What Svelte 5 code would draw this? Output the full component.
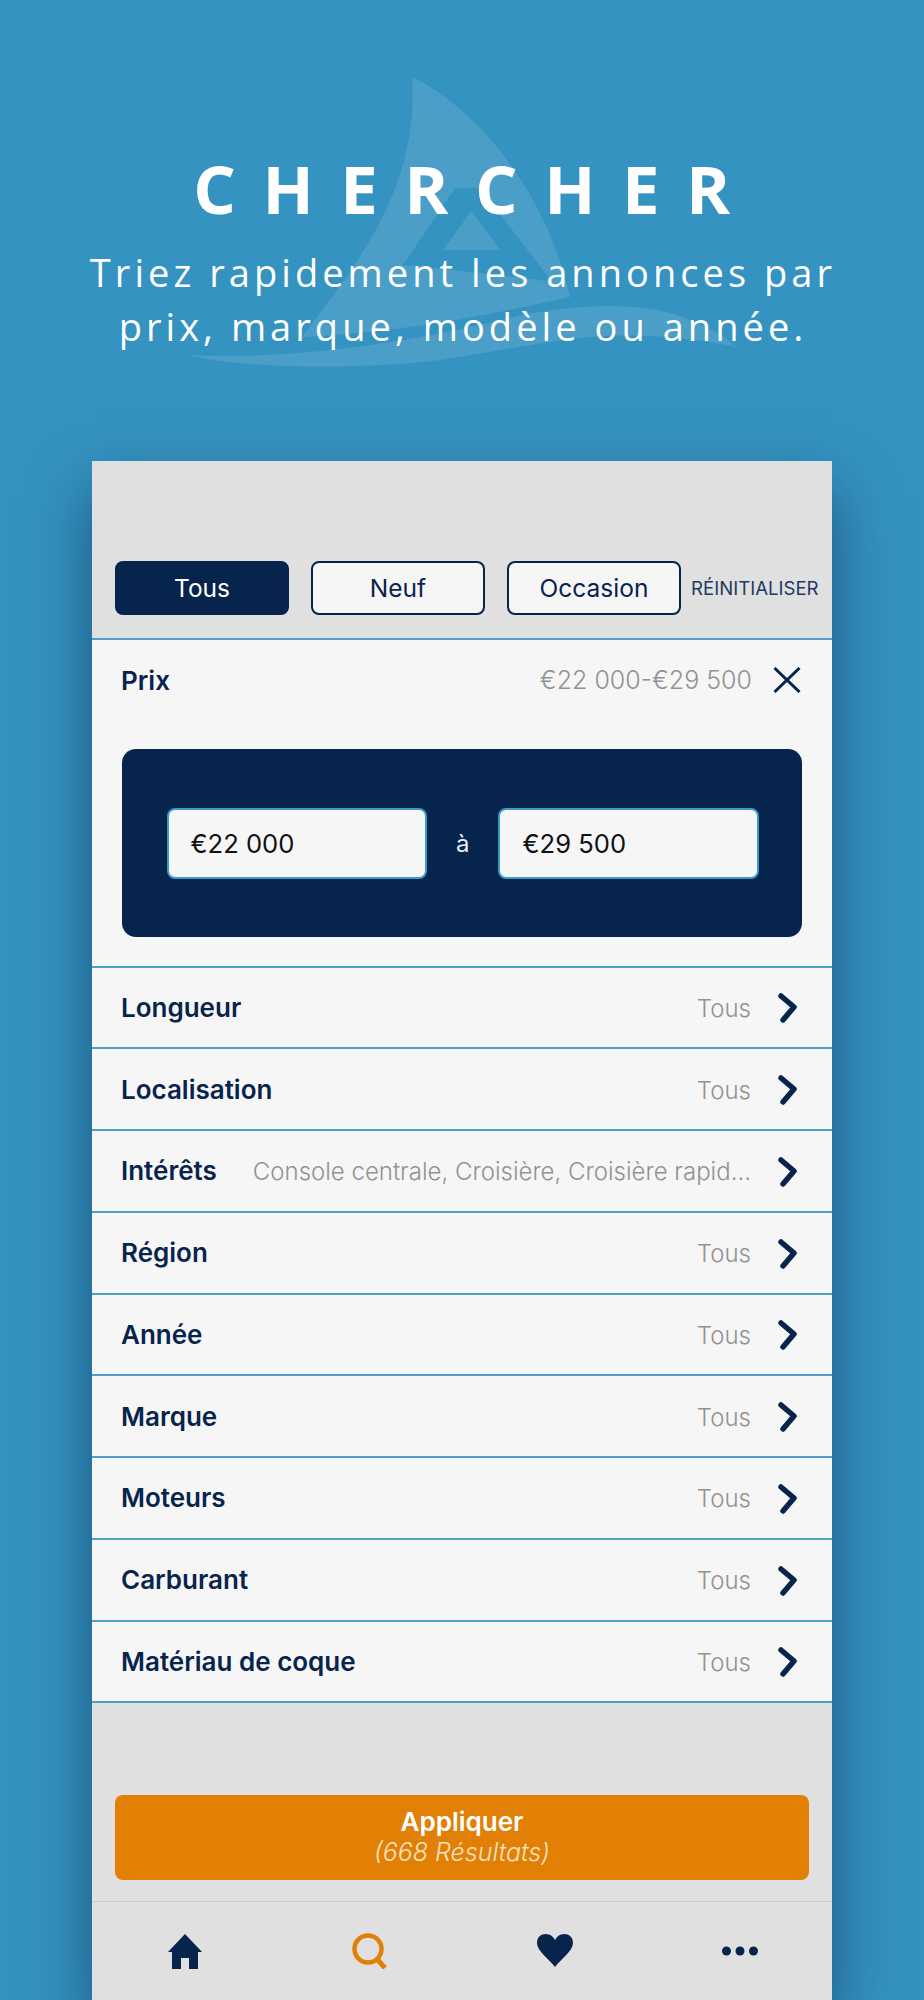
<script>
  const rows = [
    { label: 'Longueur', value: 'Tous' },
    { label: 'Localisation', value: 'Tous' },
    { label: 'Intérêts', value: 'Console centrale, Croisière, Croisière rapid…' },
    { label: 'Région', value: 'Tous' },
    { label: 'Année', value: 'Tous' },
    { label: 'Marque', value: 'Tous' },
    { label: 'Moteurs', value: 'Tous' },
    { label: 'Carburant', value: 'Tous' },
    { label: 'Matériau de coque', value: 'Tous' }
  ];
  const kinds = [
    { name: 'Tous', active: true },
    { name: 'Neuf', active: false },
    { name: 'Occasion', active: false }
  ];
</script>

<div class="page">
  <header class="hero">
    <svg class="logo" viewBox="0 0 924 400" aria-hidden="true">
      <path fill-rule="evenodd" d="M412 77 C476 108 546 190 570 297 C480 317 400 332 302 337 C352 270 420 190 412 77 Z M455 188 L403 265 C450 270 510 276 552 282 L480 188 Z" />
      <path d="M443 250 L471.6 211 L500 250 Z" />
      <path d="M187 355 C285 360 400 345 514 317 C580 303 640 302 683 317 C705 325 725 336 737 347 C705 340 650 332 591 337 C540 342 500 351 440 360 C370 369 250 370 187 355 Z" />
    </svg>
    <h1>CHERCHER</h1>
    <p>Triez rapidement les annonces par<br />prix, marque, modèle ou année.</p>
  </header>

  <main class="card">
    <section class="top">
      {#each kinds as k}
        <button class="kind" class:active={k.active}>{k.name}</button>
      {/each}
      <span class="reset">RÉINITIALISER</span>
    </section>

    <section class="price">
      <div class="price__head">
        <span class="label">Prix</span>
        <span class="value value--price">€22 000-€29 500</span>
        <svg class="close" viewBox="0 0 28 26"><path d="M1.5 1 L26.5 25 M26.5 1 L1.5 25" /></svg>
      </div>
      <div class="price__panel">
        <div class="price__input">€22 000</div>
        <span class="price__to">à</span>
        <div class="price__input">€29 500</div>
      </div>
    </section>

    {#each rows as row}
      <div class="row">
        <span class="label">{row.label}</span>
        <span class="value">{row.value}</span>
        <svg class="chevron" viewBox="0 0 20 30"><path d="M3 3 L16 14 L5 27" /></svg>
      </div>
    {/each}

    <section class="apply">
      <button class="apply__btn">
        <strong>Appliquer</strong>
        <em>(668 Résultats)</em>
      </button>
    </section>

    <nav class="tabs">
      <svg viewBox="0 0 36 36" class="tab"><path d="M18 1 L35 19 L31 19 L31 36 L22 36 L22 25 L14 25 L14 36 L5 36 L5 19 L1 19 Z" fill="#07244d" /></svg>
      <svg viewBox="0 0 36 36" class="tab"><circle cx="16" cy="16" r="13.5" fill="none" stroke="#e27f05" stroke-width="4.5" /><path d="M25 26 L33 35" stroke="#e27f05" stroke-width="5" fill="none" /></svg>
      <svg viewBox="0 0 36 36" class="tab"><path d="M18 34 C12 26 0 18 0 10 C0 4 4 1 9 1 C13 1 16 3 18 7 C20 3 23 1 27 1 C32 1 36 4 36 10 C36 18 24 26 18 34 Z" fill="#07244d" /></svg>
      <svg viewBox="0 0 36 36" class="tab"><circle cx="4.5" cy="18" r="4.5" fill="#07244d" /><circle cx="18" cy="18" r="4.5" fill="#07244d" /><circle cx="31.5" cy="18" r="4.5" fill="#07244d" /></svg>
    </nav>
  </main>
</div>

<style>
:global(body) {
  margin: 0;
  background: #3593c1;
}

.page {
  height: 2000px;
  overflow: hidden;
  background: #3593c1;
  font-family: Inter, "Liberation Sans", sans-serif;
  color: #07244d;
}

.hero {
  position: relative;
  height: 461px;
  box-sizing: border-box;
  padding-top: 142px;
  text-align: center;
  color: #fff;
  font-family: "Open Sans", sans-serif;
}

.logo {
  position: absolute;
  left: 0;
  top: 0;
  width: 924px;
  height: 400px;
  fill: rgba(255, 255, 255, 0.11);
}

h1 {
  position: relative;
  margin: 0 0 11px;
  font-size: 67px;
  line-height: 92px;
  font-weight: 700;
  letter-spacing: 26.5px;
  padding-left: 26px;
}

.hero p {
  position: relative;
  margin: 0;
  font-size: 38px;
  line-height: 54px;
  font-weight: 400;
  letter-spacing: 4.05px;
  padding-left: 2px;
}

.card {
  width: 740px;
  margin-left: 92px;
  height: 1539px;
  background: #e0e0e0;
  box-shadow: 0 30px 60px rgba(0, 20, 60, 0.5);
}

.top {
  height: 177px;
  box-sizing: border-box;
  display: flex;
  align-items: flex-end;
  gap: 22px;
  padding: 0 0 23px 23px;
}

.kind {
  width: 174px;
  height: 54px;
  box-sizing: border-box;
  border: 2px solid #07244d;
  border-radius: 8px;
  background: #f6f6f6;
  color: #07244d;
  font: 400 24.5px Inter, sans-serif;
  padding: 0;
}

.kind.active {
  background: #07244d;
  color: #fff;
}

.reset {
  margin-left: -12px;
  font-size: 18.6px;
  line-height: 54px;
  color: #1d3a60;
  white-space: nowrap;
}

.price,
.row {
  background: #f6f6f6;
  border-top: 2px solid #4f9fcb;
}

.price {
  height: 327.5px;
  box-sizing: border-box;
}

.price__head,
.row {
  display: flex;
  align-items: center;
  padding-left: 29px;
}

.price__head {
  height: 80px;
}

.row {
  height: 81.75px;
  box-sizing: border-box;
}

.row:last-of-type {
  border-bottom: 2px solid #4f9fcb;
  height: 83px;
}

.label {
  font-size: 26px;
  font-weight: 600;
  white-space: nowrap;
}

.value {
  margin-left: auto;
  padding-top: 2px;
  font-size: 24px;
  font-weight: 300;
  color: #929292;
  white-space: nowrap;
}

.value--price {
  padding-top: 0;
  font-size: 25px;
}

.close {
  width: 28px;
  height: 26px;
  margin: 0 31px 0 21px;
  fill: none;
  stroke: #07244d;
  stroke-width: 3;
}

.chevron {
  width: 20px;
  height: 30px;
  margin: 2px 34px 0 27px;
  fill: none;
  stroke: #07244d;
  stroke-width: 5.5;
  stroke-linecap: round;
  stroke-linejoin: round;
}

.price__panel {
  margin: 29px 30px 0;
  height: 188px;
  box-sizing: border-box;
  background: #07244d;
  border-radius: 14px;
  display: flex;
  align-items: center;
  justify-content: space-between;
  padding: 0 43px 0 44.5px;
}

.price__input {
  width: 260.5px;
  height: 71px;
  box-sizing: border-box;
  display: flex;
  align-items: center;
  padding-left: 22px;
  background: #f6f6f6;
  border: 2px solid #3c9ac9;
  border-radius: 8px;
  font-size: 25.6px;
  color: #111;
}

.price__to {
  color: #e8edf3;
  font-size: 24px;
}

.apply {
  height: 199.5px;
  box-sizing: border-box;
  padding: 92px 23px 0;
  border-bottom: 1px solid #cbcbcb;
}

.apply__btn {
  width: 100%;
  height: 85.5px;
  border: none;
  border-radius: 8px;
  background: #e27f05;
  padding: 0;
  display: flex;
  flex-direction: column;
  align-items: center;
  justify-content: center;
  font-family: Inter, sans-serif;
  line-height: 31px;
}

.apply__btn strong {
  font-size: 26px;
  font-weight: 600;
  color: #fff;
}

.apply__btn em {
  font-size: 25px;
  font-weight: 300;
  color: #fbe3c4;
}

.tabs {
  display: grid;
  grid-template-columns: repeat(4, 185px);
  justify-items: center;
  padding-top: 31px;
}

.tab {
  width: 36px;
  height: 36px;
}
</style>
